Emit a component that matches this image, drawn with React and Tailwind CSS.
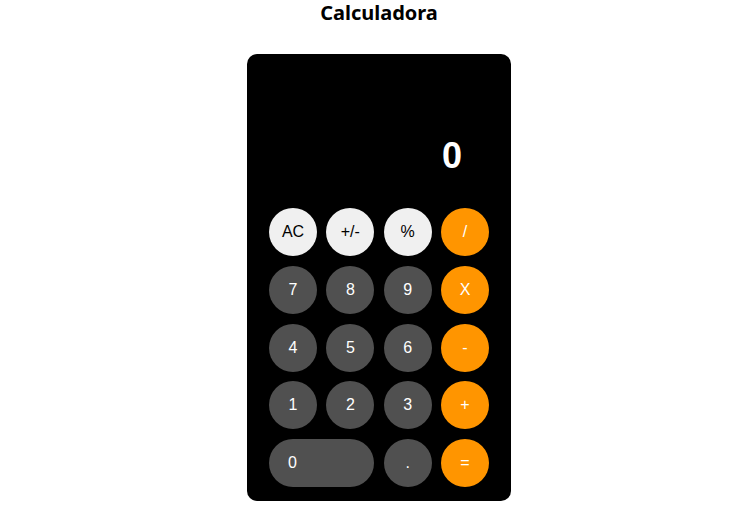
import React, { useState } from 'react'

const keys = [
  { label: 'AC', kind: 'light' },
  { label: '+/-', kind: 'light' },
  { label: '%', kind: 'light' },
  { label: '/', kind: 'op' },
  { label: '7', kind: 'num' },
  { label: '8', kind: 'num' },
  { label: '9', kind: 'num' },
  { label: 'X', kind: 'op' },
  { label: '4', kind: 'num' },
  { label: '5', kind: 'num' },
  { label: '6', kind: 'num' },
  { label: '-', kind: 'op' },
  { label: '1', kind: 'num' },
  { label: '2', kind: 'num' },
  { label: '3', kind: 'num' },
  { label: '+', kind: 'op' },
  { label: '0', kind: 'zero' },
  { label: '.', kind: 'num' },
  { label: '=', kind: 'op' },
]

const styles = {
  light: 'bg-[#f0f0f0] text-black justify-center',
  num: 'bg-[#505050] text-white justify-center',
  op: 'bg-[#ff9500] text-white justify-center',
  zero: 'bg-[#505050] text-white col-span-2 justify-start pl-[19px]',
}

export default function App() {
  const [display] = useState('0')

  return (
    <div className="min-h-[505px] bg-white flex flex-col items-center pl-[6px] font-['Liberation_Sans',Arial,sans-serif]">
      <h1 className="text-xl leading-[26px] font-bold text-black font-['Noto_Sans',sans-serif]">Calculadora</h1>

      <div className="mt-[28px] w-[264px] h-[447px] bg-black rounded-[10px] px-[22px] pb-[14px] flex flex-col">
        {/* Display */}
        <div className="flex-1 flex items-end justify-end pr-[27px] pb-[34px]">
          <span className="text-white text-[36px] leading-none font-bold">{display}</span>
        </div>

        {/* Keypad */}
        <div className="grid grid-cols-[repeat(4,48px)] auto-rows-[48px] justify-between gap-y-[9.75px]">
          {keys.map(k => (
            <button
              key={k.label}
              className={`h-12 rounded-full flex items-center text-base ${styles[k.kind]}`}
            >
              {k.label}
            </button>
          ))}
        </div>
      </div>
    </div>
  )
}
